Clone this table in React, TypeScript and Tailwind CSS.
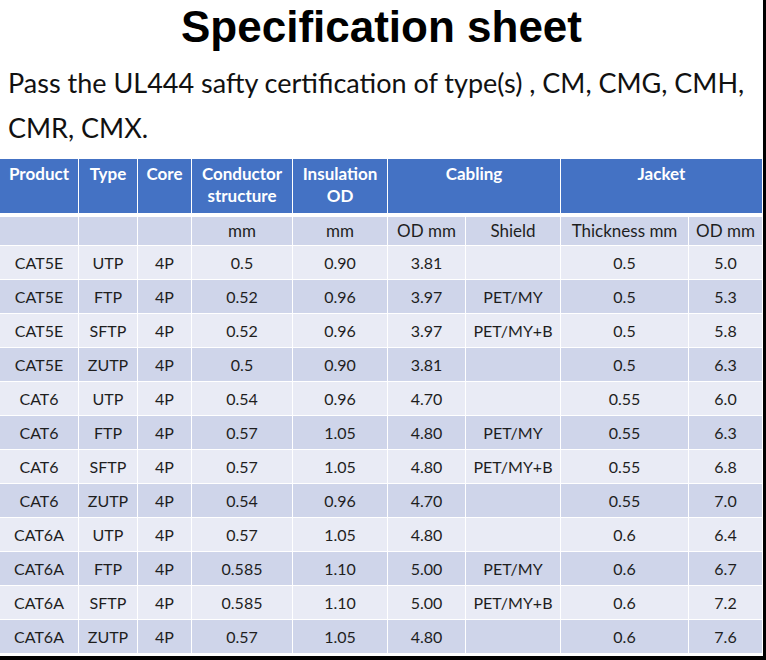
const rows = [
  ['CAT5E', 'UTP', '4P', '0.5', '0.90', '3.81', '', '0.5', '5.0'],
  ['CAT5E', 'FTP', '4P', '0.52', '0.96', '3.97', 'PET/MY', '0.5', '5.3'],
  ['CAT5E', 'SFTP', '4P', '0.52', '0.96', '3.97', 'PET/MY+B', '0.5', '5.8'],
  ['CAT5E', 'ZUTP', '4P', '0.5', '0.90', '3.81', '', '0.5', '6.3'],
  ['CAT6', 'UTP', '4P', '0.54', '0.96', '4.70', '', '0.55', '6.0'],
  ['CAT6', 'FTP', '4P', '0.57', '1.05', '4.80', 'PET/MY', '0.55', '6.3'],
  ['CAT6', 'SFTP', '4P', '0.57', '1.05', '4.80', 'PET/MY+B', '0.55', '6.8'],
  ['CAT6', 'ZUTP', '4P', '0.54', '0.96', '4.70', '', '0.55', '7.0'],
  ['CAT6A', 'UTP', '4P', '0.57', '1.05', '4.80', '', '0.6', '6.4'],
  ['CAT6A', 'FTP', '4P', '0.585', '1.10', '5.00', 'PET/MY', '0.6', '6.7'],
  ['CAT6A', 'SFTP', '4P', '0.585', '1.10', '5.00', 'PET/MY+B', '0.6', '7.2'],
  ['CAT6A', 'ZUTP', '4P', '0.57', '1.05', '4.80', '', '0.6', '7.6'],
];

const units = ['', '', '', 'mm', 'mm', 'OD mm', 'Shield', 'Thickness mm', 'OD mm'];

// column widths measured off the sheet
const grid = 'grid grid-cols-[79px_59px_54px_101px_95px_78px_95px_128px_73px]';

export default function App() {
  return (
    <div className="w-[766px] h-[660px] bg-black">
      <div className="w-[763px] h-[656px] bg-white overflow-hidden">
        {/* Title */}
        <h1 className="h-[52px] pt-[3px] text-center text-[44px] leading-[48px] font-bold text-black font-['Liberation_Sans',Arial,sans-serif]">
          Specification sheet
        </h1>

        {/* Certification note */}
        <p className="mt-[8px] px-[8px] text-[27px] leading-[45px] text-[#111] font-['Lato','Open_Sans',sans-serif]">
          Pass the UL444 safty certification of type(s) , CM, CMG, CMH,
          <br />
          CMR, CMX.
        </p>

        {/* Table */}
        <div className="mt-[9px] w-[762px] text-[16px] font-['Lato','Open_Sans',sans-serif]">
          <div className={`${grid} h-[54px] bg-[#4472c4] text-white text-[17px] font-bold leading-[22px]`}>
            <div className="border-r border-white pt-[4px] text-center">Product</div>
            <div className="border-r border-white pt-[4px] text-center">Type</div>
            <div className="border-r border-white pt-[4px] text-center">Core</div>
            <div className="border-r border-white pt-[4px] text-center">Conductor<br />structure</div>
            <div className="border-r border-white pt-[4px] text-center">Insulation<br />OD</div>
            <div className="col-span-2 border-r border-white pt-[4px] text-center">Cabling</div>
            <div className="col-span-2 pt-[4px] text-center">Jacket</div>
          </div>

          <div className={`${grid} mt-[4px] h-[28px] bg-[#cfd5ea] text-[#1e1e1e] text-[17px]`}>
            {units.map((u, i) => (
              <div key={i} className={`h-full flex items-center justify-center ${i < 8 ? 'border-r border-white' : ''}`}>
                {u}
              </div>
            ))}
          </div>

          {rows.map((r, ri) => (
            <div
              key={ri}
              className={`${grid} h-[34px] text-[#1e1e1e] border-t border-white ${ri % 2 === 0 ? 'bg-[#e9ebf5]' : 'bg-[#cfd5ea]'}`}
            >
              {r.map((c, ci) => (
                <div key={ci} className={`h-full flex items-center justify-center ${ci < 8 ? 'border-r border-white' : ''}`}>
                  {c}
                </div>
              ))}
            </div>
          ))}
        </div>
      </div>
    </div>
  );
}
